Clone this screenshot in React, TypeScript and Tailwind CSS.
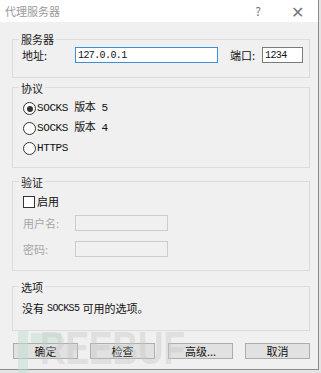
import { ReactNode } from 'react';

const cjk = '"Noto Sans CJK SC", "Microsoft YaHei", sans-serif';
const mono = '"Liberation Mono", "Noto Sans CJK SC", monospace';

const Group = ({ title, children, className }: { title: string; children: ReactNode; className: string }) => (
  <fieldset className={`ml-[12px] w-[298px] border border-[#dcdcdc] ${className}`}>
    <legend className="ml-[6px] px-[2px] text-[11px] leading-[16px] text-[#1a1a1a]">{title}</legend>
    {children}
  </fieldset>
);

const Radio = ({ checked, label }: { checked?: boolean; label: string }) => (
  <div className="flex h-[20px] items-center pl-[10px]">
    <span className="flex h-[13px] w-[13px] items-center justify-center rounded-full border border-[#333] bg-white">
      {checked && <span className="h-[6px] w-[6px] rounded-full bg-[#333]" />}
    </span>
    <span className="ml-[1px] text-[11px] tracking-[-0.4px] text-[#111]" style={{ fontFamily: mono }}>
      {label}
    </span>
  </div>
);

const Button = ({ label, className }: { label: string; className: string }) => (
  <button className={`h-[16px] w-[65px] border border-[#adadad] bg-[#e1e1e1] text-[11px] leading-[14px] text-[#111] ${className}`}>
    {label}
  </button>
);

const App = () => {
  return (
    <div className="relative h-[373px] w-[321px] overflow-hidden bg-[#e4e4e4]" style={{ fontFamily: cjk }}>
      <div className="h-[370px] w-[319px] border-r border-b border-[#8c8c8c] bg-[#f0f0f0]">
        <div className="flex h-[22px] items-center bg-white text-[11px] text-[#9a9a9a]">
          <span className="ml-[5px]">代理服务器</span>
          <span className="ml-auto mr-[30px] text-[12px] text-[#777]">?</span>
          <span className="mr-[14px] text-[16px] font-light leading-none text-[#777]">✕</span>
        </div>

        <Group title="服务器" className="mt-[9px] pb-[13px]">
          <div className="flex items-center pl-[9px] text-[11px] text-[#111]">
            <span className="w-[53px]">地址:</span>
            <input
              className="h-[16px] w-[143px] border border-[#3d8fd8] bg-white px-[2px] text-[10px] tracking-[-0.6px] text-[#111] outline-none"
              style={{ fontFamily: mono }}
              defaultValue="127.0.0.1"
            />
            <span className="ml-[12px] w-[32px]">端口:</span>
            <input
              className="h-[16px] w-[41px] border border-[#7a7a7a] bg-white px-[2px] text-[10px] tracking-[-0.6px] text-[#111] outline-none"
              style={{ fontFamily: mono }}
              defaultValue="1234"
            />
          </div>
        </Group>

        <Group title="协议" className="mt-[2px] pb-[8px]">
          <div className="pt-[3px]">
            <Radio checked label="SOCKS 版本 5" />
            <Radio label="SOCKS 版本 4" />
            <Radio label="HTTPS" />
          </div>
        </Group>

        <Group title="验证" className="mt-[6px] pb-[12px]">
          <div className="pl-[10px] pt-[4px] text-[11px]">
            <div className="flex h-[16px] items-center">
              <span className="h-[12px] w-[12px] border border-[#333] bg-white" />
              <span className="ml-[2px] text-[#111]">启用</span>
            </div>
            <div className="mt-[5px] flex items-center text-[#a6a6a6]">
              <span className="w-[52px]">用户名:</span>
              <span className="h-[16px] w-[93px] border border-[#cccccc] bg-[#f0f0f0]" />
            </div>
            <div className="mt-[10px] flex items-center text-[#a6a6a6]">
              <span className="w-[52px]">密码:</span>
              <span className="h-[16px] w-[93px] border border-[#cccccc] bg-[#f0f0f0]" />
            </div>
          </div>
        </Group>

        <Group title="选项" className="mt-[8px] pb-[13px]">
          <div className="mt-[6px] flex h-[16px] items-center pl-[9px] text-[11px] text-[#111]">
            没有 <span className="mx-[3px] text-[10px] tracking-[-0.6px]" style={{ fontFamily: mono }}>SOCKS5</span> 可用的选项。
          </div>
        </Group>

        <div className="mt-[12px] flex">
          <Button label="确定" className="ml-[13px]" />
          <Button label="检查" className="ml-[12px]" />
          <Button label="高级..." className="ml-[13px]" />
          <Button label="取消" className="ml-[12px]" />
        </div>
      </div>

      <div className="pointer-events-none absolute left-[18px] top-[331px] flex items-start">
        <span className="h-[42px] w-[10px] bg-[#bfe0d2] opacity-50" />
        <span className="ml-[3px] mt-[2px] h-[10px] w-[30px] bg-[#bfe0d2] opacity-50" />
      </div>
      <div
        className="pointer-events-none absolute left-[40px] top-[318px] origin-left scale-x-[0.75] text-[47px] font-bold leading-[60px] text-[#c8c8c8] opacity-40"
        style={{ fontFamily: '"Liberation Sans", sans-serif' }}
      >
        REEBUF
      </div>
    </div>
  );
};

export default App;
